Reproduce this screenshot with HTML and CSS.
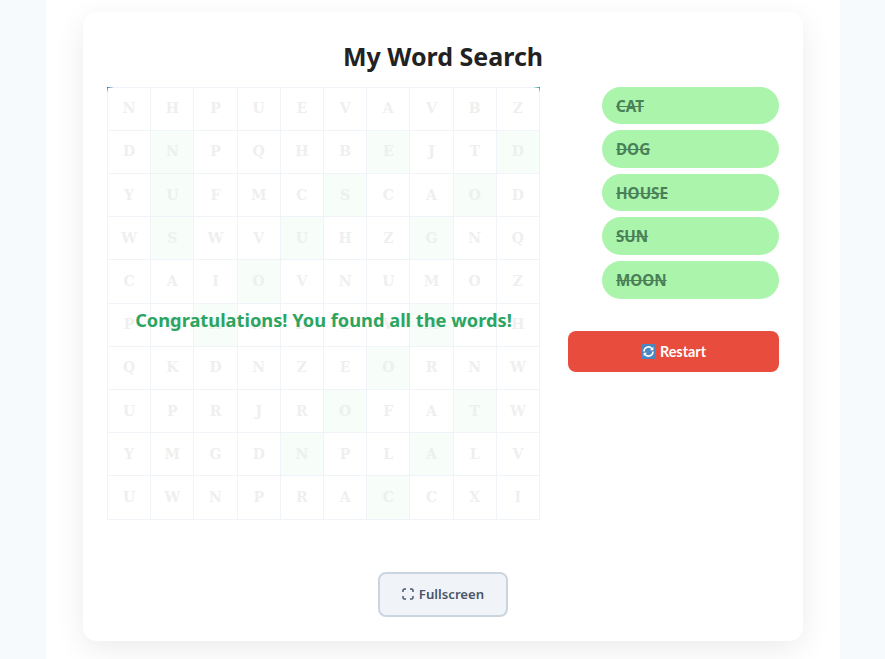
FILE: index.html
```html
<!DOCTYPE html>
<html lang="en">
<head>
<meta charset="utf-8">
<title>My Word Search</title>
<link rel="stylesheet" href="styles.css">
</head>
<body>
<div class="page">
  <main class="card">
    <h1 class="title">My Word Search</h1>
    <div class="game">
      <div class="board">
        <div class="grid">
          <div class="cell">N</div><div class="cell">H</div><div class="cell">P</div><div class="cell">U</div><div class="cell">E</div><div class="cell">V</div><div class="cell">A</div><div class="cell">V</div><div class="cell">B</div><div class="cell">Z</div>
          <div class="cell">D</div><div class="cell found">N</div><div class="cell">P</div><div class="cell">Q</div><div class="cell">H</div><div class="cell">B</div><div class="cell found">E</div><div class="cell">J</div><div class="cell">T</div><div class="cell found">D</div>
          <div class="cell">Y</div><div class="cell found">U</div><div class="cell">F</div><div class="cell">M</div><div class="cell">C</div><div class="cell found">S</div><div class="cell">C</div><div class="cell">A</div><div class="cell found">O</div><div class="cell">D</div>
          <div class="cell">W</div><div class="cell found">S</div><div class="cell">W</div><div class="cell">V</div><div class="cell found">U</div><div class="cell">H</div><div class="cell">Z</div><div class="cell found">G</div><div class="cell">N</div><div class="cell">Q</div>
          <div class="cell">C</div><div class="cell">A</div><div class="cell">I</div><div class="cell found">O</div><div class="cell">V</div><div class="cell">N</div><div class="cell">U</div><div class="cell">M</div><div class="cell">O</div><div class="cell">Z</div>
          <div class="cell">P</div><div class="cell">R</div><div class="cell found">H</div><div class="cell">A</div><div class="cell">D</div><div class="cell">L</div><div class="cell">V</div><div class="cell found">M</div><div class="cell">G</div><div class="cell">H</div>
          <div class="cell">Q</div><div class="cell">K</div><div class="cell">D</div><div class="cell">N</div><div class="cell">Z</div><div class="cell">E</div><div class="cell found">O</div><div class="cell">R</div><div class="cell">N</div><div class="cell">W</div>
          <div class="cell">U</div><div class="cell">P</div><div class="cell">R</div><div class="cell">J</div><div class="cell">R</div><div class="cell found">O</div><div class="cell">F</div><div class="cell">A</div><div class="cell found">T</div><div class="cell">W</div>
          <div class="cell">Y</div><div class="cell">M</div><div class="cell">G</div><div class="cell">D</div><div class="cell found">N</div><div class="cell">P</div><div class="cell">L</div><div class="cell found">A</div><div class="cell">L</div><div class="cell">V</div>
          <div class="cell">U</div><div class="cell">W</div><div class="cell">N</div><div class="cell">P</div><div class="cell">R</div><div class="cell">A</div><div class="cell found">C</div><div class="cell">C</div><div class="cell">X</div><div class="cell">I</div>
        </div>
        <span class="corner corner-left"></span>
        <span class="corner corner-right"></span>
        <p class="message">Congratulations! You found all the words!</p>
      </div>
      <aside class="side">
        <ul class="words">
          <li class="word">CAT</li>
          <li class="word">DOG</li>
          <li class="word">HOUSE</li>
          <li class="word">SUN</li>
          <li class="word">MOON</li>
        </ul>
        <button class="restart" type="button">
          <svg class="restart-icon" viewBox="0 0 16 16" width="15" height="15" aria-hidden="true">
            <rect width="16" height="16" rx="2" fill="#4a86c0"/>
            <path d="M3.2 8A4.8 4.8 0 0 1 11.6 4.8" fill="none" stroke="#fff" stroke-width="1.7"/>
            <path d="M12.8 8A4.8 4.8 0 0 1 4.4 11.2" fill="none" stroke="#fff" stroke-width="1.7"/>
            <path d="M13.2 3V6.6H9.6Z M2.8 13V9.4H6.4Z" fill="#fff"/>
          </svg>
          Restart
        </button>
      </aside>
    </div>
    <div class="footer">
      <button class="fullscreen" type="button">
        <svg class="fullscreen-icon" viewBox="0 0 12 12" width="12" height="12" aria-hidden="true">
          <path d="M1 4V2.6A1.6 1.6 0 0 1 2.6 1H4 M8 1H9.4A1.6 1.6 0 0 1 11 2.6V4 M11 8V9.4A1.6 1.6 0 0 1 9.4 11H8 M4 11H2.6A1.6 1.6 0 0 1 1 9.4V8" fill="none" stroke="#4a5568" stroke-width="1.5"/>
        </svg>
        Fullscreen
      </button>
    </div>
  </main>
</div>
</body>
</html>
```

FILE: styles.css
```css
* {
  box-sizing: border-box;
}

html,
body {
  margin: 0;
  height: 100%;
}

body {
  background: #f7fafd;
  overflow: hidden;
  font-family: "Noto Sans", sans-serif;
}

.page {
  width: 794px;
  height: 659px;
  margin-left: 46px;
  padding: 12px 37px 0;
  background: #fff;
}

.card {
  width: 720px;
  height: 629px;
  padding: 24px;
  background: #fff;
  border-radius: 14px;
  box-shadow: 0 8px 30px rgba(0, 0, 0, 0.08);
}

.title {
  margin: 0 0 13.6px;
  height: 37px;
  font-size: 25px;
  line-height: 40px;
  font-weight: 700;
  text-align: center;
  color: #222;
}

.game {
  display: flex;
  gap: 28px;
  height: 433px;
}

.board {
  position: relative;
  width: 433px;
  height: 433px;
  flex: none;
}

.grid {
  display: grid;
  grid-template-columns: repeat(10, 1fr);
  grid-template-rows: repeat(10, 1fr);
  width: 433px;
  height: 433px;
  border-left: 1px solid #f0f4f8;
  border-top: 1px solid #f0f4f8;
}

.cell {
  display: flex;
  align-items: center;
  justify-content: center;
  padding-bottom: 1px;
  border-right: 1px solid #f0f4f8;
  border-bottom: 1px solid #f0f4f8;
  font-family: "DejaVu Serif", serif;
  font-size: 14px;
  font-weight: 700;
  color: #efefef;
}

.found {
  background: #f7fdf8;
  color: #ecf1ed;
}

.corner {
  position: absolute;
  top: 0;
  width: 7px;
  height: 6px;
}

.corner-left {
  left: 0;
  background:
    linear-gradient(90deg, #2f7fb0, rgba(47, 127, 176, 0)) top / 100% 1px no-repeat,
    linear-gradient(180deg, #2f7fb0, rgba(47, 127, 176, 0)) left / 1px 100% no-repeat;
}

.corner-right {
  right: 0;
  background:
    linear-gradient(270deg, #2a9f94, rgba(42, 159, 148, 0)) top / 100% 1px no-repeat,
    linear-gradient(180deg, #2a9f94, rgba(42, 159, 148, 0)) right / 1px 100% no-repeat;
}

.message {
  position: absolute;
  left: 0;
  right: 0;
  top: 219px;
  margin: 0;
  font-size: 18.25px;
  line-height: 27px;
  font-weight: 700;
  text-align: center;
  color: #2ba561;
}

.side {
  width: 211px;
  flex: none;
  display: flex;
  flex-direction: column;
  align-items: flex-end;
}

.words {
  list-style: none;
  margin: 0 0 32.4px;
  padding: 0;
  width: 177px;
  display: flex;
  flex-direction: column;
  gap: 6px;
}

.word {
  height: 37.6px;
  padding: 1px 14px 0;
  border-radius: 19px;
  background: #abf4ac;
  color: #4a8058;
  font-size: 15.2px;
  line-height: 36.6px;
  font-weight: 700;
  text-decoration: line-through;
}

.restart {
  display: flex;
  align-items: center;
  justify-content: center;
  gap: 4px;
  width: 211px;
  height: 41px;
  border: 0;
  border-radius: 8px;
  background: #e74c3c;
  color: #fff;
  font-family: "Lato", sans-serif;
  font-size: 14.4px;
  font-weight: 700;
}

.footer {
  display: flex;
  justify-content: center;
  margin-top: 52.4px;
}

.fullscreen {
  display: flex;
  align-items: center;
  justify-content: center;
  gap: 5px;
  width: 130px;
  height: 45px;
  padding-top: 1px;
  border: 2px solid #cbd5e0;
  border-radius: 8px;
  background: #f0f4f8;
  color: #4a5568;
  font-family: "Noto Sans", sans-serif;
  font-size: 13.2px;
  font-weight: 600;
}
```
